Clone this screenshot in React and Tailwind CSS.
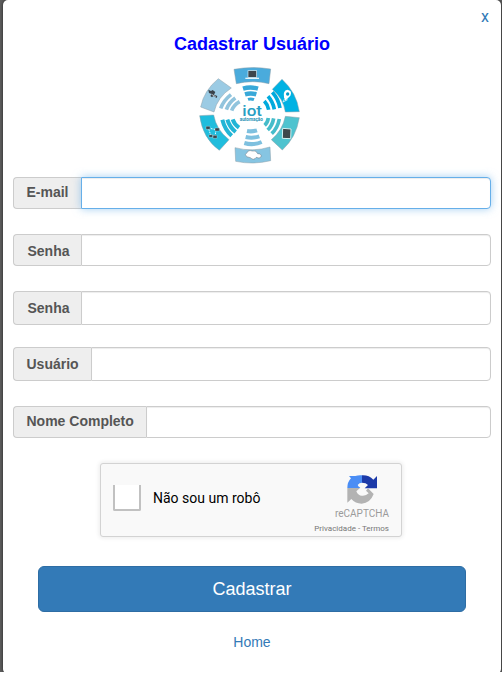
const arial = "font-['Liberation_Sans',Arial,sans-serif]";

function Field({ label, type = "text", row, addon, focused = false }) {
  return (
    <label className={`flex w-full ${row}`}>
      <span
        className={`flex shrink-0 items-center rounded-l-[4px] border border-r-0 border-[#ccc] bg-[#eee] text-[14px] font-bold text-[#555] ${addon}`}
      >
        {label}
      </span>
      <input
        type={type}
        className={`min-w-0 flex-1 rounded-r-[4px] border bg-white px-3 text-[14px] text-[#555] outline-none ${
          focused
            ? "border-[#66afe9] shadow-[inset_0_1px_1px_rgba(0,0,0,0.075),0_0_8px_rgba(102,175,233,0.6)]"
            : "border-[#ccc] shadow-[inset_0_1px_1px_rgba(0,0,0,0.075)]"
        }`}
      />
    </label>
  );
}

function IotLogo() {
  return (
    <svg viewBox="0 0 360 330" className="h-[110px] w-[120px]" role="img">
      <g stroke="#8b9fa8" strokeWidth="1.5">
        <path d="M132 28Q187 18 242 27L237 71Q188 59 139 71Z" fill="#4aabdc" />
        <path d="M276 58Q320 98 328 155L286 156Q280 116 247 88Z" fill="#00b2e3" />
        <path d="M286 169L328 173Q318 233 277 270L244 239Q278 211 286 169Z" fill="#4fc3cf" />
        <path d="M135 263Q188 277 240 261L242 302Q189 315 137 304Z" fill="#86c5e2" />
        <path d="M29 167L71 165Q79 210 117 239L88 271Q38 235 29 167Z" fill="#20bddd" />
        <path d="M85 56L124 84Q83 110 72 156L32 141Q42 91 85 56Z" fill="#9bcbe4" />
      </g>
      <g fill="none" strokeWidth="13">
        <path d="M159 86Q181 79 204 86" stroke="#38a8d8" />
        <path d="M165 103Q182 98 199 103" stroke="#38a8d8" />
        <path d="M174 118Q183 115 192 119" stroke="#38a8d8" strokeWidth="9" />
        <path d="M247 97Q265 117 270 144M234 109Q249 126 253 148M223 123Q234 135 236 149" stroke="#00aadd" strokeWidth="11" />
        <path d="M268 177Q263 204 245 221M251 175Q247 197 233 210M235 174Q233 188 224 196" stroke="#45bcca" strokeWidth="11" />
        <path d="M163 249Q189 257 215 246M167 231Q188 236 208 229M171 213Q186 216 201 211" stroke="#7ec0df" strokeWidth="12" />
        <path d="M97 179Q104 208 125 227M112 179Q119 202 137 216M128 178Q133 193 147 203" stroke="#23b5d6" strokeWidth="12" />
        <path d="M123 104Q101 121 92 145M136 114Q116 128 109 149M149 125Q131 135 125 152" stroke="#91c4dd" strokeWidth="11" />
      </g>
      <g>
        <rect x="174" y="32" width="26" height="20" fill="#3d454c" stroke="#d9eff8" strokeWidth="2" />
        <path d="M166 55H207" stroke="#e5f4fa" strokeWidth="4" />
        <path d="M286 122L282 112Q278 92 292 89Q308 91 301 107Z" fill="#fff" />
        <circle cx="293" cy="102" r="5" fill="#009bc9" />
        <path d="M284 116L279 126L293 119" stroke="#fff" strokeWidth="2" fill="none" />
        <path d="M278 205L303 207L302 236L277 235Z" fill="#3e484c" stroke="#d3f3f4" strokeWidth="3" />
        <path d="M170 290Q162 283 171 278Q175 269 187 273Q198 269 203 281Q216 281 213 291Q208 297 199 292Q191 303 181 293Z" fill="#fff" stroke="#65717a" strokeWidth="1.5" />
        <path d="M55 89L63 93L68 90L76 96L72 104L82 108L80 114L70 108L66 112L61 108L65 102L57 99Z" fill="#39424a" />
        <path d="M65 103L77 110" stroke="#fff" strokeWidth="2" />
        <path d="M55 204L78 209L75 230L62 225Z" fill="none" stroke="#e9faff" strokeWidth="3" strokeDasharray="5 3" />
        <path d="M48 199H60V208H48ZM75 204H88V213H75ZM57 224H68V232H57ZM69 226H81V235H69Z" fill="#38464e" stroke="#c8f2fb" strokeWidth="1" />
      </g>
      <text x="157" y="167" textLength="59" lengthAdjust="spacingAndGlyphs" fill="#279ec3" fontFamily="Roboto, sans-serif" fontSize="44" fontWeight="500">iot</text>
      <text x="149" y="182" textLength="70" lengthAdjust="spacingAndGlyphs" fill="#2a93b5" fontFamily="Roboto, sans-serif" fontSize="15" fontWeight="700">automação</text>
    </svg>
  );
}

function RecaptchaLogo() {
  return (
    <svg viewBox="0 0 90 87" className="h-[29px] w-[30px]" aria-hidden="true">
      <path d="M45 1V23Q37 23 32 30L40 39H1Q1 21 12 10L6 3H25Q34 0 45 1Z" fill="#4a8df5" />
      <path d="M45 1Q66 0 79 14L90 3V40H53L63 30Q57 23 45 23Z" fill="#1c3aa9" />
      <path d="M1 39H39L28 49Q34 64 48 62Q58 62 65 55L57 47L63 40L80 57Q70 84 44 86Q25 86 13 72L1 83Z" fill="#b3b3b3" />
      <path d="M33 31Q49 21 59 31L51 39Q42 29 36 36Z" fill="#f9f9f9" />
    </svg>
  );
}

function Recaptcha() {
  return (
    <div className="mt-[25px] ml-[87px] flex h-[74px] w-[302px] rounded-[3px] border border-[#d3d3d3] bg-[#f9f9f9] font-['Roboto',sans-serif] shadow-[0_0_4px_1px_rgba(0,0,0,0.08)]">
      <div className="mt-[21px] ml-[12px] h-[26px] w-[28px] rounded-b-[2px] border-2 border-t-0 border-[#c1c1c1] bg-white" />
      <div className="mt-[26px] ml-[12px] text-[14px] leading-[17px] text-black">Não sou um robô</div>
      <div className="mr-[12px] ml-auto flex flex-col items-end whitespace-nowrap text-[#9b9b9b]">
        <div className="mt-[11px] mr-[12px]">
          <RecaptchaLogo />
        </div>
        <div className="mt-[4px] text-[10px] leading-[12px]">reCAPTCHA</div>
        <div className="mt-[4px] text-[8px] leading-[10px] text-[#777]">Privacidade - Termos</div>
      </div>
    </div>
  );
}

export default function App() {
  return (
    <div className={`h-[693px] w-[502px] overflow-hidden bg-white ${arial}`}>
      <div className="h-[672px] overflow-hidden bg-[#5d5d5d] pr-px pl-[3px]">
        <main className="flex h-[674px] w-[498px] flex-col rounded-[5px] bg-white px-[10px] shadow-[0_0_3px_rgba(0,0,0,0.7)]">
          <div className="flex h-[34px] justify-end pt-[7px] pr-[2px] font-['Roboto',sans-serif] text-[16px] leading-[20px] text-[#337ab7]">
            <a href="#">x</a>
          </div>
          <h1 className="text-center text-[18px] leading-[20px] font-bold text-[#0000ff]">Cadastrar Usuário</h1>
          <div className="mt-[6px] ml-[177px] h-[110px]">
            <IotLogo />
          </div>
          <form className="mt-[7px] flex flex-col">
            <Field label="E-mail" row="h-[32px]" addon="w-[68px] pb-[2px] pl-[12.5px]" focused />
            <Field label="Senha" type="password" row="mt-[25px] h-[32px]" addon="w-[68px] pt-[2px] pl-[13.5px]" />
            <Field label="Senha" type="password" row="mt-[25px] h-[34px]" addon="w-[68px] pl-[13.5px]" />
            <Field label="Usuário" row="mt-[22px] h-[34px]" addon="w-[78px] pl-[12.5px]" />
            <Field label="Nome Completo" row="mt-[25px] h-[32px]" addon="w-[133px] pb-[2px] pl-[12.5px]" />
            <Recaptcha />
            <button
              type="button"
              className="mt-[29px] ml-[25px] h-[46px] w-[428px] rounded-[6px] border border-[#2e6da4] bg-[#337ab7] text-[18px] text-white"
            >
              Cadastrar
            </button>
          </form>
          <a href="#" className="mt-[20px] text-center text-[14px] leading-[20px] text-[#337ab7]">Home</a>
        </main>
      </div>
    </div>
  );
}
